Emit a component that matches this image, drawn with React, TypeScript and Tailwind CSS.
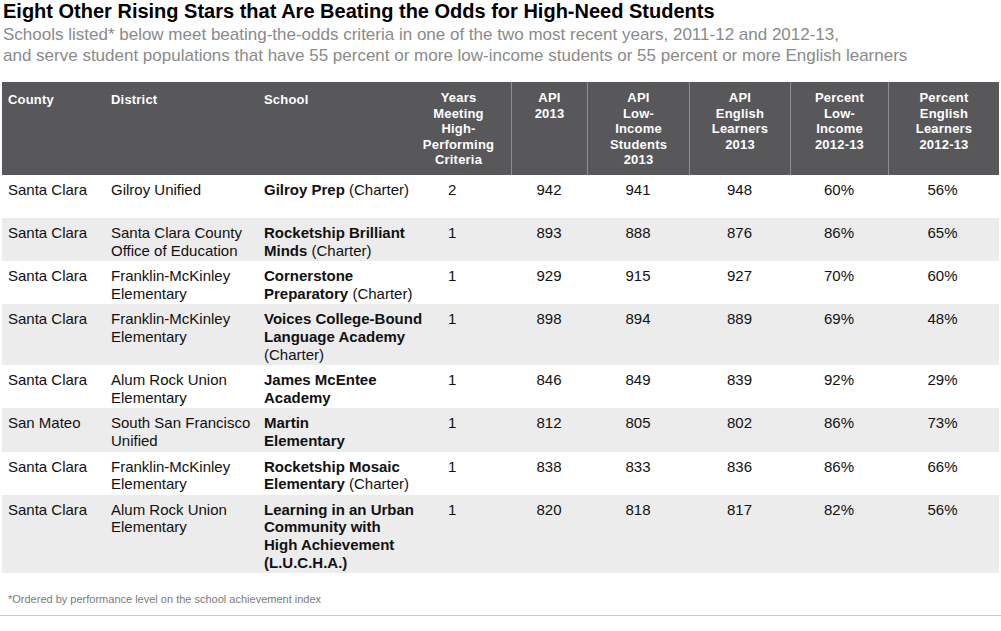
const rows = [
  { county: "Santa Clara", district: ["Gilroy Unified"], school: [<><b>Gilroy Prep</b> (Charter)</>], years: "2", api: "942", low: "941", eng: "948", pLow: "60%", pEng: "56%" },
  { county: "Santa Clara", district: ["Santa Clara County", "Office of Education"], school: [<b>Rocketship Brilliant</b>, <><b>Minds</b> (Charter)</>], years: "1", api: "893", low: "888", eng: "876", pLow: "86%", pEng: "65%" },
  { county: "Santa Clara", district: ["Franklin-McKinley", "Elementary"], school: [<b>Cornerstone</b>, <><b>Preparatory</b> (Charter)</>], years: "1", api: "929", low: "915", eng: "927", pLow: "70%", pEng: "60%" },
  { county: "Santa Clara", district: ["Franklin-McKinley", "Elementary"], school: [<b>Voices College-Bound</b>, <b>Language Academy</b>, <>(Charter)</>], years: "1", api: "898", low: "894", eng: "889", pLow: "69%", pEng: "48%" },
  { county: "Santa Clara", district: ["Alum Rock Union", "Elementary"], school: [<b>James McEntee</b>, <b>Academy</b>], years: "1", api: "846", low: "849", eng: "839", pLow: "92%", pEng: "29%" },
  { county: "San Mateo", district: ["South San Francisco", "Unified"], school: [<b>Martin</b>, <b>Elementary</b>], years: "1", api: "812", low: "805", eng: "802", pLow: "86%", pEng: "73%" },
  { county: "Santa Clara", district: ["Franklin-McKinley", "Elementary"], school: [<b>Rocketship Mosaic</b>, <><b>Elementary</b> (Charter)</>], years: "1", api: "838", low: "833", eng: "836", pLow: "86%", pEng: "66%" },
  { county: "Santa Clara", district: ["Alum Rock Union", "Elementary"], school: [<b>Learning in an Urban</b>, <b>Community with</b>, <b>High Achievement</b>, <b>(L.U.C.H.A.)</b>], years: "1", api: "820", low: "818", eng: "817", pLow: "82%", pEng: "56%" },
];

const cols = "grid-cols-[103px_156px_159px_91px_76px_102px_101px_98px_111px]";

const heads = [
  { lines: ["API", "2013"] },
  { lines: ["API", "Low-", "Income", "Students", "2013"] },
  { lines: ["API", "English", "Learners", "2013"] },
  { lines: ["Percent", "Low-", "Income", "2012-13"] },
  { lines: ["Percent", "English", "Learners", "2012-13"] },
];

export default function App() {
  return (
    <div className="w-[1001px] h-[631px] bg-white overflow-hidden text-[#111] font-['Liberation_Sans',Arial,sans-serif]">
      {/* Title */}
      <div className="pl-[3px]">
        <h1 className="text-[20px] font-bold leading-[22px] text-black">
          Eight Other Rising Stars that Are Beating the Odds for High-Need Students
        </h1>
        <p className="mt-[2px] text-[17px] leading-[21px] text-[#8a8a8a]">
          Schools listed* below meet beating-the-odds criteria in one of the two most recent years, 2011-12 and 2012-13,
          <br />
          and serve student populations that have 55 percent or more low-income students or 55 percent or more English learners
        </p>
      </div>

      {/* Table */}
      <div className="ml-[2px] mt-[16px] w-[997px]">
        <div className={`grid ${cols} bg-[#58585a] h-[93px] text-white text-[13px] font-bold leading-[15.6px] tracking-[0.2px]`}>
          <div className="pl-[6px] pt-[10px]">County</div>
          <div className="pl-[6px] pt-[10px]">District</div>
          <div className="pl-[3px] pt-[10px]">School</div>
          <div className="pt-[8px] pr-[14px] text-center">
            Years<br />Meeting<br />High-<br />Performing<br />Criteria
          </div>
          {heads.map((h, i) => (
            <div key={i} className="pt-[8px] text-center border-l border-[#8e8e8e]">
              {h.lines.map((l, j) => (
                <div key={j}>{l}</div>
              ))}
            </div>
          ))}
        </div>

        {rows.map((r, i) => (
          <div
            key={i}
            className={`grid ${cols} min-h-[43px] pt-[6px] pb-[2px] text-[15px] leading-[17.6px] ${i % 2 === 1 ? "bg-[#ececec]" : "bg-white"}`}
          >
            <div className="pl-[6px]">{r.county}</div>
            <div className="pl-[6px]">
              {r.district.map((d, j) => (
                <div key={j}>{d}</div>
              ))}
            </div>
            <div className="pl-[3px] whitespace-nowrap">
              {r.school.map((s, j) => (
                <div key={j}>{s}</div>
              ))}
            </div>
            <div className="pl-[28px]">{r.years}</div>
            <div className="text-center">{r.api}</div>
            <div className="text-center">{r.low}</div>
            <div className="text-center">{r.eng}</div>
            <div className="text-center">{r.pLow}</div>
            <div className="text-center pr-[2px]">{r.pEng}</div>
          </div>
        ))}
      </div>

      {/* Footnote */}
      <div className="pl-[8px] pt-[19px] pb-[9px] text-[11px] leading-[14px] text-[#7a7a7a]">
        *Ordered by performance level on the school achievement index
      </div>
      <div className="h-px bg-[#cccccc]" />
    </div>
  );
}
